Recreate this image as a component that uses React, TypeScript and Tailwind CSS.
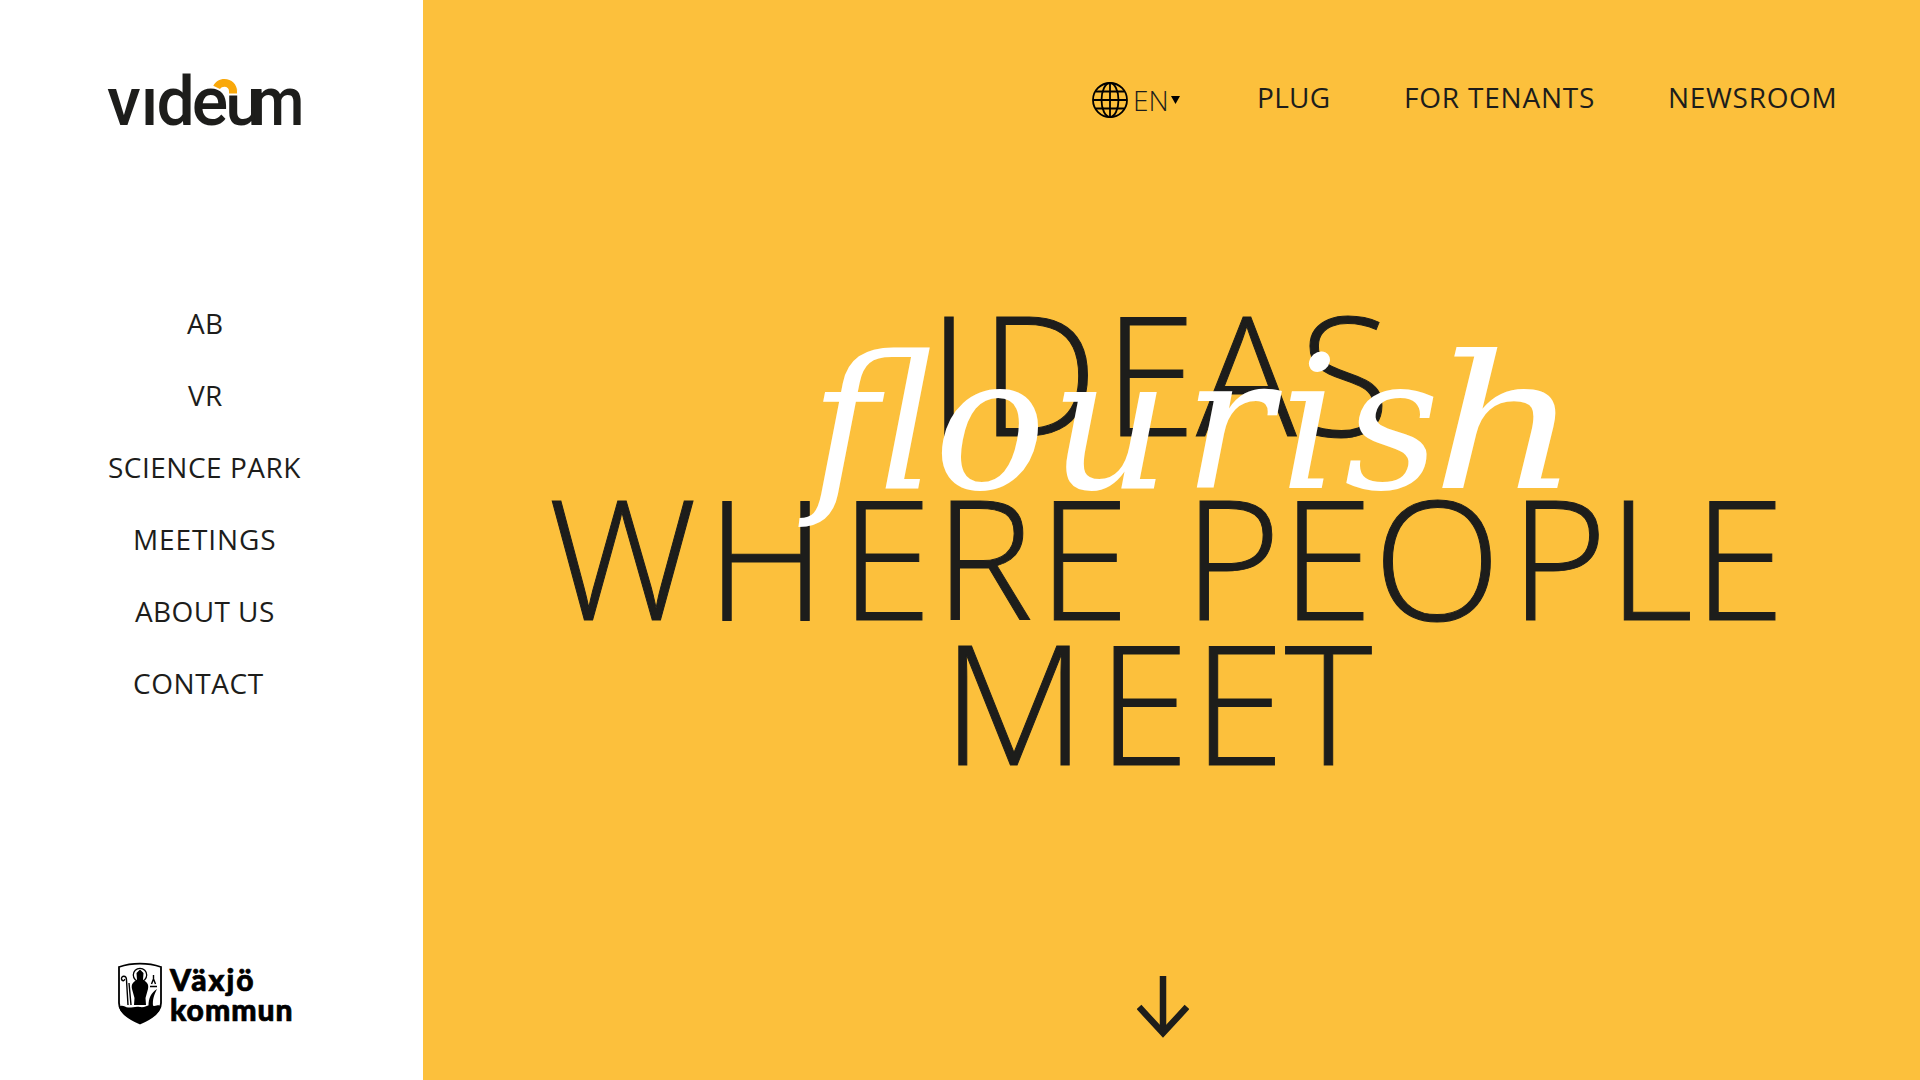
import React from "react";

const INK = "#1d1d1b";

const menu = [
  { label: "AB", className: "ml-[187px]" },
  { label: "VR", className: "ml-[188px]" },
  { label: "SCIENCE PARK", className: "ml-[108px] tracking-[0.5px]" },
  { label: "MEETINGS", className: "ml-[133px] tracking-[0.9px]" },
  { label: "ABOUT US", className: "ml-[135px]" },
  { label: "CONTACT", className: "ml-[133px] tracking-[0.6px]" },
];

function VideumLogo() {
  return (
    <a href="#" aria-label="videum" className="relative ml-[107px] mt-[68px] flex h-[68px] w-[200px] font-[Roboto] text-[68px] leading-[68px] font-medium text-[#1d1d1b] [font-kerning:none]">
      <span>v</span>
      <span className="tracking-[-2px]">ı</span>
      <span className="tracking-[-3px]">d</span>
      <span className="tracking-[-3px]">e</span>
      <span className="tracking-[-18px]">u</span>
      <span className="origin-right scale-x-90">m</span>
      <svg className="absolute left-[103px] top-[8px]" width="30" height="22" viewBox="210 76 30 22" fill="none">
        <path d="M228 84h9v11h-9z" fill="#fff" />
        <path d="M211 86.500C213 81 218 78 224 78C232 78 238 84 238 91V95.500H228.500V91C228.500 88 225.500 86 223 86.800L219.500 90.500Z" fill="#fff" />
        <path d="M213.300 85.800C215.500 81.500 219.500 79 224.500 79C231.500 79 237 84.500 237 91V93.500H229V91C229 88.500 227 86.700 224.500 86.700C222.500 86.700 221 87.500 220 89Z" fill="#f9a80a" />
      </svg>
    </a>
  );
}

function Shield() {
  return (
    <svg width="46" height="64" viewBox="0 0 46 64" fill="none">
      <path d="M2 5C15 .5 31 .5 44 5V41C44 50 36 56 23 61.500C10 56 2 50 2 41Z" fill="#fff" stroke="#000" strokeWidth="1.800" />
      <path d="M2 45C5 42 8 45 11 45.500C15 46 18 44 23 45C28 46 31 42 35 43.500C39 45 41 42 44 44C42 52 35 56 23 61.500C11 56 4 52 2 45Z" fill="#000" />
      <circle cx="23" cy="13" r="6.700" stroke="#000" strokeWidth="1.300" />
      <path d="M23 7.500L26.500 11L26 18C30 20 32 22 31 27L28.500 36L29 43H17L17.500 36L15 27C14 22 16 20 20 18L19.500 11Z" fill="#000" />
      <path d="M11 43L9.500 18C9.500 13 4 13.500 4.500 17C5 19.500 8 19 7.500 17M12 21L14 43" stroke="#000" strokeWidth="1.400" />
      <path d="M31.500 44C31.500 36 34 31 40 27C37 33 35.500 37 36 44Z" fill="#000" />
      <path d="M36.500 13V18M34.500 22L36.500 17L38.500 22M33 24.500H40" stroke="#000" strokeWidth="1.400" />
    </svg>
  );
}

function Globe() {
  return (
    <svg width="38" height="38" viewBox="0 0 38 38" fill="none" stroke="#000" strokeWidth="1.800">
      <circle cx="19" cy="19" r="17" />
      <ellipse cx="19" cy="19" rx="8.500" ry="17" />
      <path d="M19 2V36M2 19H36M5 10.500H33M5 27.500H33" />
    </svg>
  );
}

export default function App() {
  return (
    <div className="flex h-[1080px] w-[1920px] overflow-hidden font-['Open_Sans',sans-serif] text-[#1d1d1b]">
      <aside className="flex w-[423px] shrink-0 flex-col bg-white">
        <VideumLogo />
        <nav className="mt-[151px] flex flex-col text-[28px] leading-[72px] tracking-[0.4px]">
          {menu.map((item) => (
            <a key={item.label} href="#" className={item.className}>
              {item.label}
            </a>
          ))}
        </nav>
        <div className="mt-auto mb-[54px] ml-[117px] flex h-[64px] gap-[7px] text-black">
          <Shield />
          <div className="flex flex-col pt-0.5 font-[Lato] text-[30px] leading-[30px] font-black [-webkit-text-stroke:0.7px_black]">
            <span className="tracking-[2px]">Växjö</span>
            <span className="tracking-[1px]">kommun</span>
          </div>
        </div>
      </aside>

      <main className="flex flex-1 flex-col bg-[#fcc03c]">
        <header className="flex h-[200px] shrink-0 items-start pl-[668px] pt-[78px] text-[28px] leading-[38px] whitespace-nowrap">
          <div className="flex w-[166px] items-center pt-[3px]">
            <Globe />
            <span className="ml-1 font-light">EN</span>
            <svg className="ml-[2px]" width="9" height="8" viewBox="0 0 9 8">
              <path d="M0 0H9L4.500 8Z" fill="#000" />
            </svg>
          </div>
          <a href="#" className="w-[147px] tracking-[0.3px]">PLUG</a>
          <a href="#" className="w-[264px] tracking-[0.8px]">FOR TENANTS</a>
          <a href="#" className="tracking-[0.7px]">NEWSROOM</a>
        </header>

        <h1 className="relative flex flex-col text-[167px] font-light whitespace-pre [font-kerning:none]">
          <span className="h-[184px] pl-[505px] pt-[88px] leading-[167px] [-webkit-text-stroke:1px_#1d1d1b]">
            <span className="tracking-[10px]">I</span>
            <span className="tracking-[6px]">D</span>
            <span>E</span>
            <span className="tracking-[3px]">A</span>
            <span>S</span>
          </span>
          <span className="h-[145px] pl-[125px] pt-[88px] leading-[167px] [-webkit-text-stroke:1px_#1d1d1b]">
            <span className="tracking-[9px]">W</span>
            <span className="tracking-[14px]">H</span>
            <span className="tracking-[2px]">E</span>
            <span className="tracking-[4px]">R</span>
            <span className="tracking-[10px]">E</span>
            <span> PE</span>
            <span className="tracking-[9px]">O</span>
            <span>PLE</span>
          </span>
          <span className="h-[145px] pl-[519px] pt-[88px] leading-[167px] [-webkit-text-stroke:1px_#1d1d1b]">
            <span className="tracking-[11px]">M</span>
            <span className="tracking-[3px]">E</span>
            <span>ET</span>
          </span>
          <em className="absolute left-[387px] top-[121px] font-['DejaVu_Serif'] text-[186px] leading-[206px] font-normal text-white">
            <span>fl</span>
            <span className="tracking-[4px]">o</span>
            <span className="tracking-[14px]">u</span>
            <span className="tracking-[7px]">r</span>
            <span className="tracking-[5px]">i</span>
            <span className="tracking-[-9px]">s</span>
            <span className="inline-block origin-left scale-x-125">h</span>
          </em>
        </h1>

        <svg className="mt-auto mb-[42px] ml-[714px]" width="52" height="62" viewBox="0 0 52 62" fill="none" stroke={INK}>
          <path d="M26 0V57" strokeWidth="6.500" />
          <path d="M2 31L26 57L50 31" strokeWidth="6.500" />
        </svg>
      </main>
    </div>
  );
}
